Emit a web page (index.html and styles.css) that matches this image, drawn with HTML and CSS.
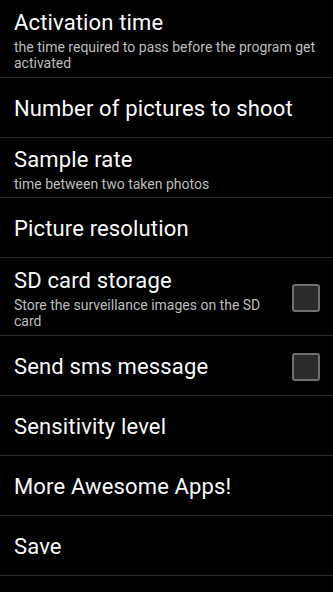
FILE: index.html
```html
<!DOCTYPE html>
<html lang="en">
<head>
<meta charset="utf-8">
<title>Settings</title>
<link rel="stylesheet" href="styles.css">
</head>
<body>
<ul class="prefs">
  <li class="row row--tall">
    <div class="text">
      <div class="title">Activation time</div>
      <div class="summary">the time required to pass before the program get activated</div>
    </div>
  </li>
  <li class="row">
    <div class="text"><div class="title">Number of pictures to shoot</div></div>
  </li>
  <li class="row">
    <div class="text">
      <div class="title">Sample rate</div>
      <div class="summary">time between two taken photos</div>
    </div>
  </li>
  <li class="row">
    <div class="text"><div class="title">Picture resolution</div></div>
  </li>
  <li class="row row--tall">
    <div class="text">
      <div class="title">SD card storage</div>
      <div class="summary">Store the surveillance images on the SD card</div>
    </div>
    <span class="check"></span>
  </li>
  <li class="row">
    <div class="text"><div class="title">Send sms message</div></div>
    <span class="check"></span>
  </li>
  <li class="row">
    <div class="text"><div class="title">Sensitivity level</div></div>
  </li>
  <li class="row">
    <div class="text"><div class="title">More Awesome Apps!</div></div>
  </li>
  <li class="row">
    <div class="text"><div class="title">Save</div></div>
  </li>
</ul>
</body>
</html>
```

FILE: styles.css
```css
html, body {
  margin: 0;
  padding: 0;
  background: #000;
}

body {
  font-family: Roboto, "Noto Sans", "Liberation Sans", sans-serif;
  color: #fff;
  overflow: hidden;
}

.prefs {
  list-style: none;
  margin: 0;
  padding: 0;
}

.row {
  box-sizing: border-box;
  min-height: 60px;
  display: flex;
  align-items: center;
  gap: 12px;
  padding: 2px 12px 0 14px;
  border-bottom: 1px solid #2c2c2c;
}

.row--tall {
  min-height: 78px;
}

.text {
  flex: 1;
  min-width: 0;
}

.title {
  font-size: 22px;
  line-height: 27px;
  letter-spacing: 0.15px;
  color: #fafafa;
}

.summary {
  margin-top: 3px;
  font-size: 14px;
  line-height: 16px;
  color: #bdbdbd;
}

.check {
  flex: none;
  box-sizing: border-box;
  width: 28px;
  height: 28px;
  margin-right: 1px;
  border: 2px solid #6e6e6e;
  border-radius: 3px;
  background: #2b2b2b;
}
```
